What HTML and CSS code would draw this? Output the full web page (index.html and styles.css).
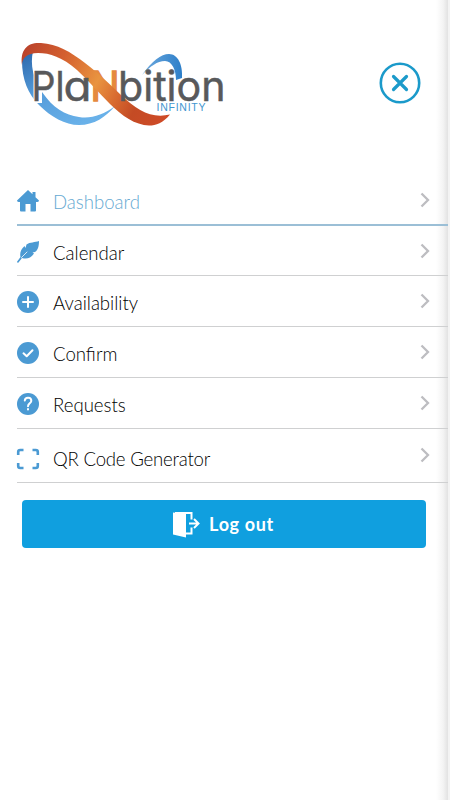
FILE: index.html
```html
<!DOCTYPE html>
<html lang="en">
<head>
<meta charset="utf-8">
<title>Planbition Infinity</title>
<link rel="stylesheet" href="styles.css">
</head>
<body>
<main class="drawer">
  <header class="header">
    <svg class="logo" width="206" height="90" viewBox="20 38 206 90" role="img" aria-label="Planbition Infinity">
      <defs>
        <linearGradient id="ribbon" gradientUnits="userSpaceOnUse" x1="22" y1="50" x2="168" y2="122">
          <stop offset="0" stop-color="#b9412b"/><stop offset=".25" stop-color="#d4602f"/><stop offset=".5" stop-color="#e99440"/><stop offset=".64" stop-color="#d96c30"/><stop offset=".78" stop-color="#c44b24"/><stop offset="1" stop-color="#d04b28"/>
        </linearGradient>
        <linearGradient id="blueLeft" x1="0" y1="0" x2=".6" y2="1">
          <stop offset="0" stop-color="#2a65aa"/><stop offset=".5" stop-color="#559cda"/><stop offset="1" stop-color="#69b1e9"/>
        </linearGradient>
        <linearGradient id="blueTop" x1="0" y1="0" x2="1" y2="0">
          <stop offset="0" stop-color="#6faade"/><stop offset="1" stop-color="#2d7fc9"/>
        </linearGradient>
      </defs>
      <path fill="url(#blueLeft)" d="M22 61C22 79 28 94 39 105C51 117 65 125 79 125C94 125 106 117 115 106C103 115 91 119 79 117C65 115 53 108 42 92C33 78 30 65 33 51L24 54Z"/>
      <path fill="#fff" d="M33.500 69H48V91H42V103H33.500Z"/>
      <path fill="url(#blueTop)" d="M142 75C152 61 161 54 169 54C178 54 183 65 182 78L176 80C176 70 172 61 165 61C157 61 151 66 142 75Z"/>
      <text class="wordmark accent" x="90.500" y="101" textLength="29" lengthAdjust="spacingAndGlyphs">N</text>
      <path fill="url(#ribbon)" d="M22 65C20 49 28 42 41 43C57 44 71 52 85 63C99 74 110 84 121 95C137 110 151 119 170 114.500C163 123 156 125.500 149 125.500C135 125 122 116 110 104C99 93 88 80 77 70C62 57 50 53 38 53C27 53 22 58 22 65Z"/>
      <text class="wordmark" x="31.500" y="101"><tspan textLength="24" lengthAdjust="spacingAndGlyphs">P</tspan><tspan x="55.500" textLength="9" lengthAdjust="spacingAndGlyphs">l</tspan><tspan x="63.500" textLength="28" lengthAdjust="spacingAndGlyphs">a</tspan></text>
      <text class="wordmark" x="118" y="101" textLength="107.500" lengthAdjust="spacingAndGlyphs">bition</text>
      <text class="tagline" x="156.500" y="111" textLength="49">INFINITY</text>
    </svg>
    <button class="close" aria-label="Close">
      <svg width="42" height="42" viewBox="0 0 42 42"><circle cx="21" cy="21" r="19.200"/><path d="M14.500 14.500L27.500 27.500M27.500 14.500L14.500 27.500" stroke-width="3.200" stroke-linecap="round"/></svg>
    </button>
  </header>
  <nav class="menu">
    <a class="item active"><svg class="icon" viewBox="0 0 22 22"><path d="M11 0L15.500 4.300V2H18.500V7.200L22 10.600Q22 12 20.500 12H19V20.500Q19 21.500 18 21.500H13.500V14H8.500V21.500H4Q3 21.500 3 20.500V12H1.500Q0 12 0 10.600Z"/></svg><span class="label">Dashboard</span><svg class="chevron" viewBox="0 0 10 16"><path d="M1.500 1.500L8 8L1.500 14.500"/></svg></a>
    <a class="item first"><svg class="icon" viewBox="0 0 22 22"><path d="M22 0C22 5 21 9 18 11L15.500 11.500L17 12.500C14 17 10 18.500 5 17L1.500 21.500Q.3 22.200 0 20.700L3.500 16C2.500 12 4 8 7.500 5L8.500 7L9.500 3.500C13 1 18 1.500 22 0Z"/><path class="mark fine" d="M4.500 16.500L10 11"/></svg><span class="label">Calendar</span><svg class="chevron" viewBox="0 0 10 16"><path d="M1.500 1.500L8 8L1.500 14.500"/></svg></a>
    <a class="item"><svg class="icon" viewBox="0 0 22 22"><circle cx="11" cy="11" r="11"/><path class="mark" d="M11 6V16M6 11H16"/></svg><span class="label">Availability</span><svg class="chevron" viewBox="0 0 10 16"><path d="M1.500 1.500L8 8L1.500 14.500"/></svg></a>
    <a class="item"><svg class="icon" viewBox="0 0 22 22"><circle cx="11" cy="11" r="11"/><path class="mark" d="M6.500 11.300L9.700 14.200L15.500 8.200"/></svg><span class="label">Confirm</span><svg class="chevron" viewBox="0 0 10 16"><path d="M1.500 1.500L8 8L1.500 14.500"/></svg></a>
    <a class="item"><svg class="icon" viewBox="0 0 22 22"><circle cx="11" cy="11" r="11"/><path class="mark" d="M7.800 7.500C8.200 3.800 14.500 4 14.300 8C14.100 10.200 11 10.500 11 13.200M11 16.100V16.600"/></svg><span class="label">Requests</span><svg class="chevron" viewBox="0 0 10 16"><path d="M1.500 1.500L8 8L1.500 14.500"/></svg></a>
    <a class="item tall"><svg class="icon" viewBox="0 0 22 22"><path class="frame" d="M1.200 7V4Q1.200 2 3.200 2H6.500M15.500 2H18.800Q20.800 2 20.800 4V7M1.200 15V18Q1.200 20 3.200 20H6.500M15.500 20H18.800Q20.800 20 20.800 18V15"/></svg><span class="label">QR Code Generator</span><svg class="chevron" viewBox="0 0 10 16"><path d="M1.500 1.500L8 8L1.500 14.500"/></svg></a>
  </nav>
  <button class="logout"><svg width="28" height="27" viewBox="0 0 28 27"><path fill="#fff" d="M1 1.500L14 3V26.500L1 23.500Z"/><path fill="none" stroke="#fff" stroke-width="2" d="M3 2H19.500V8.500M19.500 16.500V22.500H14M17 12.500H26M22 8L26.500 12.500L22 17"/></svg><span>Log out</span></button>
</main>
</body>
</html>
```
FILE: styles.css
```css
* { box-sizing: border-box; }
body { margin: 0; background: #f3f3f3; font-family: Lato, sans-serif; }
.drawer {
  width: 448px;
  height: 800px;
  background: linear-gradient(to left, #e2e2e2, #f4f4f4 5px, #fff 12px);
}
.header {
  display: flex;
  justify-content: space-between;
  height: 174px;
  padding: 38px 27px 0 20px;
}
.close { width: 42px; height: 42px; margin-top: 24px; padding: 0; border: 0; background: none; }
.close svg { display: block; fill: none; stroke: #1b9aca; stroke-width: 2.6; }
.wordmark { font: 400 41px Inter, sans-serif; font-feature-settings: "cv11"; fill: #58595b; stroke: #58595b; stroke-width: .5px; }
.accent { fill: #e58a3e; stroke: #e58a3e; stroke-width: 1.5px; }
.tagline { font: 400 10.500px "Liberation Sans", sans-serif; fill: #4196d0; }
.menu { padding-left: 17px; }
.item {
  display: flex;
  align-items: center;
  height: 51px;
  padding-right: 18px;
  border-bottom: 1px solid #cfd0d1;
  color: #000;
}
.active { height: 52px; padding-top: 2px; border-bottom: 2px solid #9bbfd6; color: #65a9d2; }
.first { height: 50px; }
.tall { height: 54px; }
.icon { width: 22px; height: 22px; margin: 2px 14px 0 0; fill: #4b9ad3; overflow: visible; }
.icon .mark { fill: none; stroke: #fff; stroke-width: 2; stroke-linecap: round; stroke-linejoin: round; }
.icon .fine { stroke-width: .8; }
.icon .frame { fill: none; stroke: #4b9ad3; stroke-width: 2.6; }
.label { flex: 1; font-size: 18.6px; font-weight: 300; line-height: 24px; padding-top: 4px; }
.active .label { padding-top: 3px; }
.tall .label { padding-top: 6px; letter-spacing: -.2px; }
.tall .icon { margin-top: 6px; }
.tall .chevron { margin-bottom: 1px; }
.chevron { width: 10px; height: 16px; fill: none; stroke: #bdbdc1; stroke-width: 2.3; }
.logout {
  display: flex;
  align-items: center;
  justify-content: center;
  gap: 9px;
  width: 404px;
  height: 48px;
  margin: 17px 0 0 22px;
  padding: 0 2px 0 0;
  border: 0;
  border-radius: 4px;
  background: #109fdf;
  color: #fff;
  font: 700 18px Lato, sans-serif;
  letter-spacing: .65px;
}
```
